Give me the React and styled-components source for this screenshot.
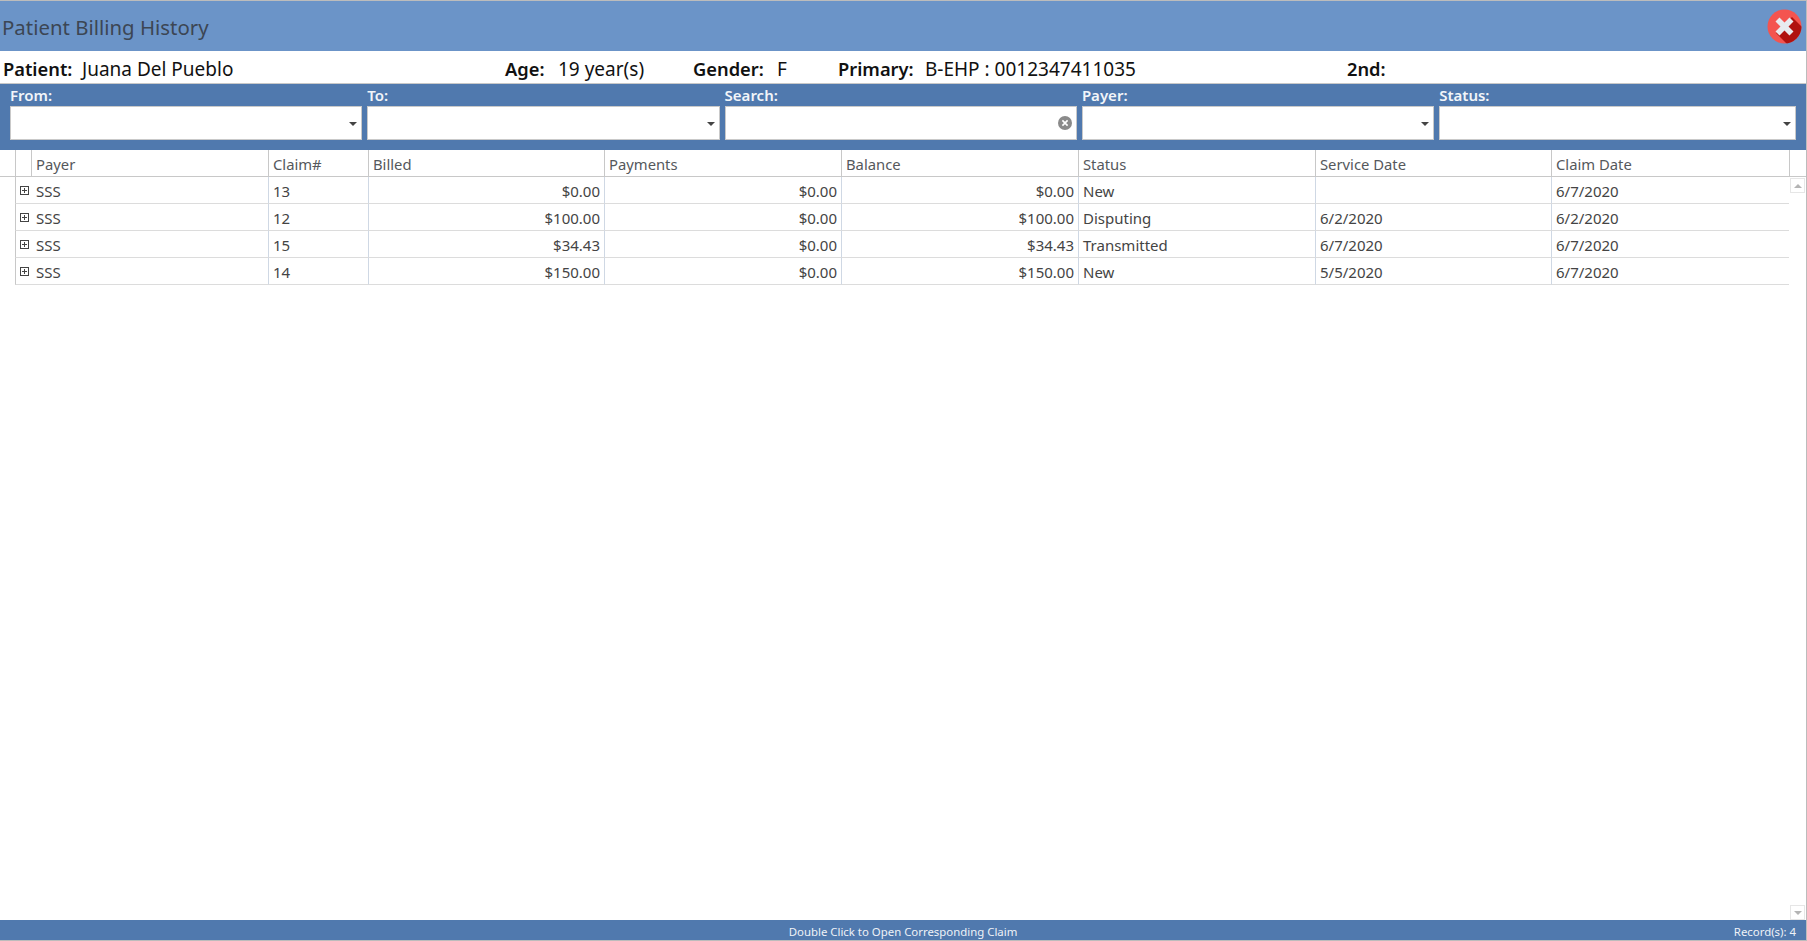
import React from 'react';
import styled, { createGlobalStyle } from 'styled-components';

const GlobalStyle = createGlobalStyle`
  html, body {
    margin: 0;
    padding: 0;
    background: #fff;
    overflow: hidden;
  }
  * {
    box-sizing: border-box;
  }
`;

const COLUMNS = '16px 16px 237px 100px 236px 237px 237px 237px 236px 238px 1fr';
const FONT = '"Noto Sans", "Open Sans", "Liberation Sans", sans-serif';

const Window = styled.div`
  height: 941px;
  display: flex;
  flex-direction: column;
  font-family: ${FONT};
  border-top: 1px solid #bcbcbc;
  border-bottom: 1px solid #bcbcbc;
  border-right: 1px solid #bcbcbc;
  background: #fff;
`;

const TitleBar = styled.div`
  height: 50px;
  flex: none;
  display: flex;
  align-items: center;
  justify-content: space-between;
  padding: 0 4px 0 2px;
  background: #6b94c8;
`;

const Title = styled.div`
  padding-top: 2px;
  font-size: 20.4px;
  color: #3c4654;
`;

const InfoRow = styled.div`
  height: 33px;
  flex: none;
  display: flex;
  align-items: center;
  padding: 4px 0 0 3px;
  border-bottom: 1px solid #c8c8c8;
  font-size: 19px;
  color: #111;
`;

const InfoItem = styled.div`
  width: ${(p) => p.$width}px;
  flex: none;
  white-space: nowrap;
`;

const InfoLabel = styled.span`
  display: inline-block;
  width: ${(p) => p.$width}px;
  font-size: 18.3px;
  font-weight: 600;
`;

const Filters = styled.div`
  height: 66px;
  flex: none;
  display: grid;
  grid-template-columns: repeat(4, 352.3px) 1fr;
  column-gap: 5px;
  padding: 0 10px;
  background: #5079ae;
`;

const Filter = styled.div`
  display: flex;
  flex-direction: column;
`;

const FilterLabel = styled.div`
  height: 22px;
  font-size: 15px;
  line-height: 22px;
  font-weight: 600;
  color: #f2f5f9;
`;

const FilterInput = styled.div`
  height: 34px;
  display: flex;
  align-items: center;
  justify-content: flex-end;
  padding-right: 4px;
  background: #fff;
  border: 1px solid #c9c9c9;
`;

const Caret = styled.div`
  width: 0;
  height: 0;
  border-left: 4px solid transparent;
  border-right: 4px solid transparent;
  border-top: 4px solid #444;
  margin-top: 2px;
`;

const Table = styled.div`
  flex: 1;
  position: relative;
  min-height: 0;
`;

const HeaderRow = styled.div`
  display: grid;
  grid-template-columns: ${COLUMNS};
  height: 27px;
  border-bottom: 1px solid #c8c8c8;
  font-size: 14.8px;
  color: #55585c;
`;

const HeaderCell = styled.div`
  border-right: 1px solid #c8c8c8;
  padding: 2px 0 0 4px;
  line-height: 24px;
  white-space: nowrap;
  &:last-child {
    border-right: 0;
  }
`;

const DataRow = styled.div`
  display: grid;
  grid-template-columns: ${COLUMNS};
  height: 27px;
  font-size: 15px;
  color: #444;
`;

const Blank = styled.div``;

const ExpandCell = styled.div`
  border-left: 1px solid #c8c8c8;
  border-bottom: 1px solid #dcdcdc;
  display: flex;
  justify-content: center;
  padding-top: 9px;
  margin-left: -1px;
`;

const ExpandBox = styled.div`
  position: relative;
  width: 9px;
  height: 9px;
  border: 1px solid #444;
  &::before {
    content: '';
    position: absolute;
    left: 1px;
    right: 1px;
    top: 3px;
    height: 1px;
    background: #444;
  }
  &::after {
    content: '';
    position: absolute;
    top: 1px;
    bottom: 1px;
    left: 3px;
    width: 1px;
    background: #444;
  }
`;

const Cell = styled.div`
  border-right: ${(p) => (p.$last ? '0' : '1px solid #cfd8e4')};
  border-bottom: 1px solid #dcdcdc;
  margin-right: ${(p) => (p.$last ? '1px' : '0')};
  padding: 2px 4px 0;
  line-height: 24px;
  white-space: nowrap;
  text-align: ${(p) => (p.$money ? 'right' : 'left')};
`;

const ScrollButton = styled.div`
  position: absolute;
  right: 1px;
  ${(p) => (p.$down ? 'bottom: 0;' : 'top: 28px;')}
  width: 15px;
  height: 15px;
  display: flex;
  align-items: center;
  justify-content: center;
  border: 1px solid #e6e6e6;
  background: #fff;
`;

const ScrollArrow = styled.div`
  width: 0;
  height: 0;
  border-left: 4px solid transparent;
  border-right: 4px solid transparent;
  ${(p) => (p.$down ? 'border-top: 4px solid #b4b4b4;' : 'border-bottom: 4px solid #b4b4b4;')}
`;

const StatusBar = styled.div`
  height: 20px;
  flex: none;
  display: grid;
  grid-template-columns: 1fr auto 1fr;
  align-items: center;
  padding: 2px 10px 0;
  background: #5079ae;
  font-size: 11.4px;
  color: #eef2f7;
`;

const StatusRight = styled.div`
  text-align: right;
`;

const CloseIcon = () => (
  <svg width="35" height="35" viewBox="0 0 35 35">
    <defs>
      <clipPath id="closeClip">
        <circle cx="17.5" cy="17.5" r="17" />
      </clipPath>
    </defs>
    <circle cx="17.5" cy="17.5" r="17" fill="#f4544f" />
    <path d="M25 8 L35 18 L35 35 L20 35 L9 24 Z" fill="#b0120f" clipPath="url(#closeClip)" />
    <path
      d="M12.5 8.5 L17.5 13.5 L22.5 8.5 L26.5 12.5 L21.5 17.5 L26.5 22.5 L22.5 26.5 L17.5 21.5 L12.5 26.5 L8.5 22.5 L13.5 17.5 L8.5 12.5 Z"
      fill="#e8ebef"
    />
  </svg>
);

const ClearIcon = () => (
  <svg width="14" height="14" viewBox="0 0 14 14">
    <circle cx="7" cy="7" r="7" fill="#8a8a8a" />
    <path d="M4.4 4.4 L9.6 9.6 M9.6 4.4 L4.4 9.6" stroke="#fff" strokeWidth="1.6" />
  </svg>
);

const filters = [
  { label: 'From:', kind: 'caret' },
  { label: 'To:', kind: 'caret' },
  { label: 'Search:', kind: 'clear' },
  { label: 'Payer:', kind: 'caret' },
  { label: 'Status:', kind: 'caret' },
];

const headers = ['Payer', 'Claim#', 'Billed', 'Payments', 'Balance', 'Status', 'Service Date', 'Claim Date'];

const rows = [
  ['SSS', '13', '$0.00', '$0.00', '$0.00', 'New', '', '6/7/2020'],
  ['SSS', '12', '$100.00', '$0.00', '$100.00', 'Disputing', '6/2/2020', '6/2/2020'],
  ['SSS', '15', '$34.43', '$0.00', '$34.43', 'Transmitted', '6/7/2020', '6/7/2020'],
  ['SSS', '14', '$150.00', '$0.00', '$150.00', 'New', '5/5/2020', '6/7/2020'],
];

export default function App() {
  return (
    <Window>
      <GlobalStyle />
      <TitleBar>
        <Title>Patient Billing History</Title>
        <CloseIcon />
      </TitleBar>
      <InfoRow>
        <InfoItem $width={502}>
          <InfoLabel $width={79}>Patient:</InfoLabel>Juana Del Pueblo
        </InfoItem>
        <InfoItem $width={188}>
          <InfoLabel $width={53}>Age:</InfoLabel>19 year(s)
        </InfoItem>
        <InfoItem $width={145}>
          <InfoLabel $width={84}>Gender:</InfoLabel>F
        </InfoItem>
        <InfoItem $width={509}>
          <InfoLabel $width={87}>Primary:</InfoLabel>B-EHP : 0012347411035
        </InfoItem>
        <InfoItem $width={100}>
          <InfoLabel $width={60}>2nd:</InfoLabel>
        </InfoItem>
      </InfoRow>
      <Filters>
        {filters.map((f) => (
          <Filter key={f.label}>
            <FilterLabel>{f.label}</FilterLabel>
            <FilterInput>{f.kind === 'clear' ? <ClearIcon /> : <Caret />}</FilterInput>
          </Filter>
        ))}
      </Filters>
      <Table>
        <ScrollButton>
          <ScrollArrow />
        </ScrollButton>
        <ScrollButton $down>
          <ScrollArrow $down />
        </ScrollButton>
        <HeaderRow>
          <HeaderCell />
          <HeaderCell />
          {headers.map((h) => (
            <HeaderCell key={h}>{h}</HeaderCell>
          ))}
          <HeaderCell />
        </HeaderRow>
        {rows.map((row) => (
          <DataRow key={row[1]}>
            <Blank />
            <ExpandCell>
              <ExpandBox />
            </ExpandCell>
            {row.map((value, i) => (
              <Cell key={i} $money={i >= 2 && i <= 4} $last={i === row.length - 1}>
                {value}
              </Cell>
            ))}
          </DataRow>
        ))}
      </Table>
      <StatusBar>
        <div />
        <div>Double Click to Open Corresponding Claim</div>
        <StatusRight>Record(s): 4</StatusRight>
      </StatusBar>
    </Window>
  );
}
